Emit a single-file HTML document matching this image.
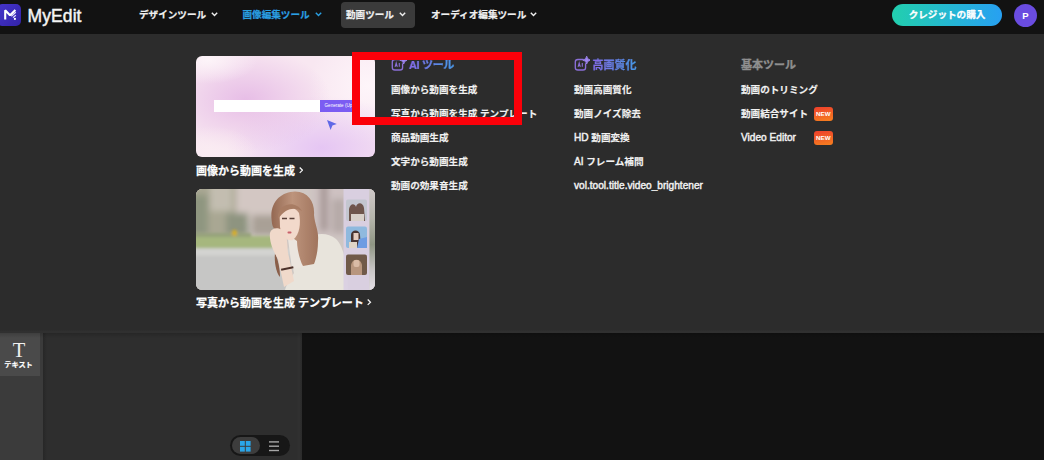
<!DOCTYPE html>
<html lang="ja"><head><meta charset="utf-8">
<style>
*{box-sizing:border-box;margin:0;padding:0}
html,body{width:1044px;height:460px;overflow:hidden;background:#121212;font-family:"Liberation Sans","Noto Sans CJK JP",sans-serif;color:#fff}
.abs{position:absolute}
#hdr{left:0;top:0;width:1044px;height:34px;background:#121212}
#logo{left:-3px;top:3.5px;width:24px;height:22.5px;border-radius:5px;background:linear-gradient(135deg,#4535cc,#3323a8)}
#brand{left:27.5px;top:4.6px;font-size:17.5px;line-height:22px;font-weight:400;color:#f4f4f4;-webkit-text-stroke:.45px #f4f4f4;letter-spacing:.1px}
.nav{top:7.5px;font-size:9.6px;line-height:14px;font-weight:700;color:#f0f0f0;white-space:nowrap;-webkit-text-stroke:.2px currentColor}
.chev{top:12px;width:7px;height:5px}
#navbtn{left:341px;top:2px;width:73.5px;height:25.5px;border-radius:4px;background:#3b3b3b}
#credit{left:892px;top:3.5px;width:110px;height:22.5px;border-radius:12px;background:linear-gradient(90deg,#22cfae,#27a0f2);font-size:9.6px;font-weight:700;line-height:22px;text-align:center;color:#fff;-webkit-text-stroke:.25px #fff}
#avatar{left:1014px;top:3.5px;width:23px;height:23px;border-radius:50%;background:#6a4ce0;font-size:9.5px;font-weight:700;line-height:23px;text-align:center;color:#fff}
#panel{left:0;top:34px;width:1044px;height:299.5px;background:linear-gradient(180deg,#2c2c2c 0,#2c2c2c 296px,#303030 297.5px,#303030 299.5px)}
.card{left:196px;width:179px;border-radius:6px;overflow:hidden}
.ctitle{left:196px;font-size:11px;font-weight:700;line-height:16px;color:#fff;white-space:nowrap;-webkit-text-stroke:.25px #fff}
.cv{margin-left:3.6px;position:relative;top:-1.3px}
.sec{font-size:11px;font-weight:700;line-height:16px;white-space:nowrap;-webkit-text-stroke:.2px currentColor}
.grad{background:linear-gradient(90deg,#8a66e6,#3f9de4);-webkit-background-clip:text;background-clip:text;color:transparent;-webkit-text-stroke:.2px #6a82e6}
.it{font-size:9.6px;font-weight:700;line-height:14px;color:#f2f2f2;white-space:nowrap;-webkit-text-stroke:.15px #f2f2f2}
.lat{font-weight:400;font-size:10.15px;-webkit-text-stroke:.42px #f2f2f2}
.new{width:19.5px;height:14px;border-radius:3px;background:linear-gradient(170deg,#ee3f2c,#f6801f);font-size:6.2px;font-weight:700;line-height:14px;text-align:center;color:#fff}
#side{left:0;top:333px;width:43px;height:127px;background:#3b3b3b}
#sideact{left:0;top:333px;width:40px;height:43px;background:#4a4a4a}
#lpanel{left:43px;top:333px;width:258.6px;height:127px;background:linear-gradient(90deg,#272727 0,#2e2e2e 4px,#2e2e2e 254px,#313131 256px,#2b2b2b 258.6px)}
#canvas{left:301.6px;top:333.4px;width:743px;height:127px;background:#121212}
#shadow{left:0;top:333px;width:1044px;height:5px;background:linear-gradient(180deg,rgba(0,0,0,.16),rgba(0,0,0,0))}
#toggle{left:230px;top:435px;width:59.5px;height:20.5px;border-radius:11px;background:#171717}
#tgon{left:231.5px;top:436.5px;width:28px;height:17.5px;border-radius:9px;background:#3d3d3d}
#red{left:352.1px;top:51.8px;width:170.1px;height:73.3px;border:8.2px solid #fb0009}
</style></head><body>
<div id="hdr" class="abs"></div>
<div id="logo" class="abs"></div>
<svg class="abs" style="left:0;top:0" width="24" height="30" viewBox="0 0 24 30"><polyline points="5.2,19.6 5.2,10.2 10,15.2 15.4,10" fill="none" stroke="#fff" stroke-width="2.1" stroke-linejoin="bevel"/><path d="M11.3 16.2 L15.8 12.2 M13 17.6 L15.8 15.2" stroke="#e8e4ff" stroke-width="1.2" fill="none"/><circle cx="14.9" cy="18.9" r="1.1" fill="#fff"/></svg>
<div id="brand" class="abs">MyEdit</div>
<div class="nav abs" style="left:139px">デザインツール</div>
<svg class="chev abs" style="left:210.5px" viewBox="0 0 7 5"><polyline points="0.8,0.8 3.5,3.6 6.2,0.8" fill="none" stroke="#f0f0f0" stroke-width="1.4"/></svg>
<div class="nav abs" style="left:242.5px;color:#2a9fe2">画像編集ツール</div>
<svg class="chev abs" style="left:314.5px" viewBox="0 0 7 5"><polyline points="0.8,0.8 3.5,3.6 6.2,0.8" fill="none" stroke="#2a9fe2" stroke-width="1.4"/></svg>
<div id="navbtn" class="abs"></div>
<div class="nav abs" style="left:346px">動画ツール</div>
<svg class="chev abs" style="left:398.5px" viewBox="0 0 7 5"><polyline points="0.8,0.8 3.5,3.6 6.2,0.8" fill="none" stroke="#f0f0f0" stroke-width="1.4"/></svg>
<div class="nav abs" style="left:431px">オーディオ編集ツール</div>
<svg class="chev abs" style="left:530px" viewBox="0 0 7 5"><polyline points="0.8,0.8 3.5,3.6 6.2,0.8" fill="none" stroke="#f0f0f0" stroke-width="1.4"/></svg>
<div id="credit" class="abs">クレジットの購入</div>
<div id="avatar" class="abs">P</div>
<div id="panel" class="abs"></div>

<!-- card 1 -->
<div class="card abs" id="c1" style="top:55.5px;height:101px;background:radial-gradient(ellipse 50px 24px at 12px 4px,rgba(253,245,249,.95),rgba(253,245,249,0) 100%),radial-gradient(ellipse 48px 26px at 14px 96px,rgba(250,236,242,.9),rgba(250,236,242,0) 100%),radial-gradient(ellipse 85px 52px at 50px 44px,rgba(227,180,228,.82),rgba(227,180,228,0) 100%),radial-gradient(ellipse 95px 52px at 126px 92px,rgba(226,192,244,.85),rgba(226,192,244,0) 100%),radial-gradient(ellipse 60px 60px at 172px 30px,rgba(254,246,250,.95),rgba(254,246,250,0) 100%),#f8e7f1">
  <div class="abs" style="left:18px;top:44px;width:106px;height:12.5px;background:#fff"></div>
  <div class="abs" style="left:123.5px;top:44px;width:38.5px;height:12.5px;background:#7b5cf2;color:#fff;font-size:4.6px;line-height:12.5px;padding-left:5px;white-space:nowrap">Generate (Up</div>
  <svg class="abs" style="left:129.5px;top:63.5px" width="12" height="12" viewBox="0 0 12 12"><path d="M1 1 L10.8 5 L6.4 6.6 L4.6 11 Z" fill="#6068e6"/></svg>
</div>
<div class="ctitle abs" style="top:162.8px">画像から動画を生成<svg class="cv" width="4.4" height="6.4" viewBox="0 0 4.4 6.4"><polyline points="0.7,0.5 3.5,3.2 0.7,5.9" fill="none" stroke="#f4f4f4" stroke-width="1.25"/></svg></div>

<!-- card 2 -->
<div class="card abs" id="c2" style="top:189px;height:101px;background:#cfc8c4">
<svg width="179" height="101" viewBox="0 0 179 101" style="display:block">
<defs><filter id="b3" x="-10%" y="-10%" width="120%" height="120%"><feGaussianBlur stdDeviation="3.2"/></filter><filter id="b2" x="-10%" y="-10%" width="120%" height="120%"><feGaussianBlur stdDeviation="1.4"/></filter><filter id="b1" x="-10%" y="-10%" width="120%" height="120%"><feGaussianBlur stdDeviation=".7"/></filter>
<linearGradient id="rg" x1="0" y1="0" x2="0" y2="1"><stop offset="0" stop-color="#cfc9c9"/><stop offset=".3" stop-color="#b4b4aa"/><stop offset=".55" stop-color="#8f9684"/><stop offset=".8" stop-color="#c9c6c6"/><stop offset="1" stop-color="#e4dfe6"/></linearGradient><linearGradient id="hg" x1="0" y1="0" x2="1" y2="0"><stop offset="0" stop-color="#946852"/><stop offset=".45" stop-color="#bd947c"/><stop offset="1" stop-color="#a0745d"/></linearGradient></defs>
<rect width="179" height="101" fill="#cfc7c3"/>
<g filter="url(#b3)">
 <rect x="-8" y="-8" width="60" height="58" fill="#a9a793"/>
 <rect x="-8" y="6" width="20" height="40" fill="#8f9680"/>
 <rect x="14" y="-8" width="22" height="30" fill="#c3bdb0"/>
 <rect x="40" y="-8" width="45" height="40" fill="#d3c7c3"/>
 <rect x="30" y="24" width="22" height="22" fill="#8e9480"/>
 <rect x="56" y="26" width="26" height="20" fill="#a9a096"/>
 <rect x="116" y="-8" width="40" height="56" fill="#cdc1c1"/>
 <rect x="124" y="-8" width="8" height="50" fill="#a89a98"/>
 <rect x="136" y="10" width="14" height="34" fill="#b6aaa8"/>
</g>
<g filter="url(#b2)">
 <rect x="-5" y="47" width="82" height="12.5" fill="#a6b77e"/>
 <rect x="-5" y="44" width="60" height="4" fill="#96a27c"/>
 <rect x="-5" y="59.5" width="100" height="50" fill="#c6c6c5"/>
 <rect x="-5" y="59.5" width="100" height="7" fill="#d3d3d1"/>
 <rect x="36" y="41" width="5" height="6" rx="2" fill="#d6ae24"/>
</g>
<g filter="url(#b1)">
 <path d="M100 60 C108 46 128 40 140 50 C150 60 152 84 152 104 L88 104 C90 96 94 90 98 84 C96 76 96 66 100 60Z" fill="#e8e4dc"/>
 <path d="M92 50 L106 50 L108 78 L96 80Z" fill="#ebe5de"/>
 <path d="M75.5 30 C74 12 86 3 99 2.6 C113 3 119 14 118 26 C119 36 123 42 122 52 C122 62 120 70 118 75 L107 77 C104 72 101 60 101 52 L84 40 L79 40 C76 38 76 34 75.5 30Z" fill="url(#hg)"/>
 <path d="M79 64 C82 70 84 80 84 88 C80 84 78 72 79 64Z" fill="#8a5e4a"/>
 <path d="M83.5 24 C88 17 99 17 103 24 C105 34 104 45 97 51 C90 53 85 46 84 38Z" fill="#f2d9cb"/>
 <path d="M82 26 C84 14 100 11 106 22 C98 18 90 19 82 30Z" fill="#a87c64"/>
 <path d="M86 29.5 h5 M93.5 29.5 h5" stroke="#5a4038" stroke-width="1.3" fill="none"/>
 <rect x="91.5" y="42.6" width="4" height="1.8" rx=".9" fill="#c8606a"/>
 <path d="M74 44 C76 37 87 38 90 46 C92 54 91 62 93 68 L98 92 L88 98 C86 88 84 80 82 70 C77 62 73 52 74 44Z" fill="#f0d9ca"/>
 <rect x="85" y="78.5" width="12.5" height="2" fill="#4e332b" transform="rotate(-12 91 79.5)"/>
</g>
<rect x="147.5" y="0" width="26" height="101" fill="#d9d0e2" opacity=".93"/>
<rect x="173.5" y="0" width="6" height="101" fill="url(#rg)" filter="url(#b1)"/>
<g filter="url(#b1)">
 <rect x="150" y="10.5" width="21" height="21.5" rx="2" fill="#c3c6cf"/>
 <path d="M153 32 L153 20 C154 14 159 14 160 18 C161 13 167 13 168 19 L169 32Z" fill="#6e544c"/>
 <rect x="155" y="25" width="13" height="7" fill="#d8d0c8"/>
 <rect x="150" y="37.5" width="21" height="21.5" rx="2" fill="#8fb9de"/>
 <path d="M155 59 L155 46 C155 40 164 40 164 46 L165 59Z" fill="#4a3530"/>
 <rect x="157.5" y="44" width="5" height="7" fill="#e6cdbf"/>
 <path d="M161 59 L163 50 L171 48 L171 59Z" fill="#6d9ce2"/>
 <rect x="153" y="53" width="8" height="6" fill="#e0d4c6"/>
 <rect x="150" y="65.5" width="21" height="20.5" rx="2" fill="#6f5a48"/>
 <path d="M155 86 L155 76 C156 69 165 69 166 76 L166 86Z" fill="#b8967e"/>
 <rect x="157.5" y="71" width="6" height="7" rx="2" fill="#d9bba6"/>
</g>
</svg>
</div>
<div class="ctitle abs" style="top:294.8px">写真から動画を生成 テンプレート<svg class="cv" width="4.4" height="6.4" viewBox="0 0 4.4 6.4"><polyline points="0.7,0.5 3.5,3.2 0.7,5.9" fill="none" stroke="#f4f4f4" stroke-width="1.25"/></svg></div>

<!-- column 1 -->
<svg class="abs" style="left:390.8px;top:56px" width="16" height="16" viewBox="0 0 16 16"><rect x="1.3" y="3.5" width="10.3" height="10.5" rx="2.6" fill="none" stroke="#8b6fd8" stroke-width="1.35"/><circle cx="12.7" cy="4.1" r="3.4" fill="#2c2c2c"/><path d="M12.7 .2 Q13.1 3.7 16.6 4.1 Q13.1 4.5 12.7 8 Q12.3 4.5 8.8 4.1 Q12.3 3.7 12.7 .2Z" fill="#9f86f2" stroke="#9f86f2" stroke-width=".9" stroke-linejoin="round"/><path d="M4.1 10.8 L5.2 7 L6.3 10.8 M8.3 7 V10.8" fill="none" stroke="#8b6fd8" stroke-width="1.1"/></svg>
<div class="sec grad abs" style="left:409px;top:56.5px;letter-spacing:-.35px">AI ツール</div>
<div class="it abs" style="left:391px;top:82.5px">画像から動画を生成</div>
<div class="it abs" style="left:391px;top:106.5px">写真から動画を生成 テンプレート</div>
<div class="it abs" style="left:391px;top:131px">商品動画生成</div>
<div class="it abs" style="left:391px;top:155px">文字から動画生成</div>
<div class="it abs" style="left:391px;top:179px">動画の効果音生成</div>

<!-- column 2 -->
<svg class="abs" style="left:574.3px;top:56px" width="16" height="16" viewBox="0 0 16 16"><rect x="1.3" y="3.5" width="10.3" height="10.5" rx="2.6" fill="none" stroke="#8b6fd8" stroke-width="1.35"/><circle cx="12.7" cy="4.1" r="3.4" fill="#2c2c2c"/><path d="M12.7 .2 Q13.1 3.7 16.6 4.1 Q13.1 4.5 12.7 8 Q12.3 4.5 8.8 4.1 Q12.3 3.7 12.7 .2Z" fill="#9f86f2" stroke="#9f86f2" stroke-width=".9" stroke-linejoin="round"/><path d="M4.1 10.8 L5.2 7 L6.3 10.8 M8.3 7 V10.8" fill="none" stroke="#8b6fd8" stroke-width="1.1"/></svg>
<div class="sec grad abs" style="left:592.5px;top:56.5px">高画質化</div>
<div class="it abs" style="left:574px;top:82.5px">動画高画質化</div>
<div class="it abs" style="left:574px;top:106.5px">動画ノイズ除去</div>
<div class="it abs" style="left:574px;top:131px"><span class="lat">HD</span> 動画変換</div>
<div class="it abs" style="left:574px;top:155px"><span class="lat">AI</span> フレーム補間</div>
<div class="it abs" style="left:574px;top:179px"><span class="lat">vol.tool.title.video_brightener</span></div>

<!-- column 3 -->
<div class="sec abs" style="left:741px;top:56.5px;color:#8f8f8f;-webkit-text-stroke:.35px #8f8f8f">基本ツール</div>
<div class="it abs" style="left:741px;top:82.5px">動画のトリミング</div>
<div class="it abs" style="left:741px;top:106.5px">動画結合サイト</div>
<div class="new abs" style="left:813.5px;top:107px">NEW</div>
<div class="it abs" style="left:741px;top:131px"><span class="lat">Video Editor</span></div>
<div class="new abs" style="left:813.5px;top:131px">NEW</div>

<!-- bottom -->
<div id="side" class="abs"></div>
<div id="sideact" class="abs"></div>
<div id="lpanel" class="abs"></div>
<div id="canvas" class="abs"></div>
<div id="shadow" class="abs"></div>
<div class="abs" style="left:0;top:339px;width:38px;text-align:center;font-family:'Liberation Serif',serif;font-size:20.5px;line-height:22px;color:#f0f0f0">T</div>
<div class="abs" style="left:0;top:359.7px;width:37px;text-align:center;font-size:7.2px;font-weight:700;line-height:10px;color:#fff;-webkit-text-stroke:.2px #fff">テキスト</div>
<div id="toggle" class="abs"></div>
<div id="tgon" class="abs"></div>
<svg class="abs" style="left:239.5px;top:441px" width="11" height="11" viewBox="0 0 11 11"><g fill="#2aa6ea"><rect x="0" y="0" width="4.8" height="4.8"/><rect x="5.8" y="0" width="4.8" height="4.8"/><rect x="0" y="5.8" width="4.8" height="4.8"/><rect x="5.8" y="5.8" width="4.8" height="4.8"/></g></svg>
<svg class="abs" style="left:268.5px;top:441px" width="11" height="11" viewBox="0 0 11 11"><g fill="#a6a6a6"><rect x="0" y="0.2" width="10" height="1.4"/><rect x="0" y="4.5" width="10" height="1.4"/><rect x="0" y="8.8" width="10" height="1.4"/></g></svg>
<div id="red" class="abs"></div>
</body></html>
